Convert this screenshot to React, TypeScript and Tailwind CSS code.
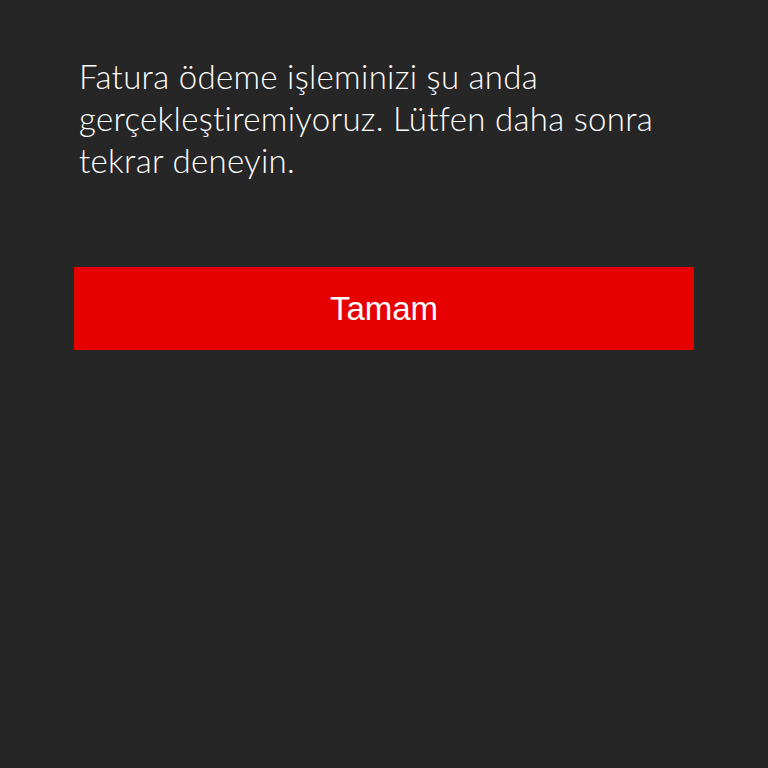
export default function App() {
    return (
        <div className="min-h-[768px] w-full bg-[#262626] px-[74px] pt-[55px]">
            {/* Message */}
            <p className="pl-[5px] text-[33px] leading-[42px] font-light tracking-[0.3px] text-white font-['Lato','Noto_Sans',sans-serif]">
                Fatura ödeme işleminizi şu anda
                <br />
                gerçekleştiremiyoruz. Lütfen daha sonra
                <br />
                tekrar deneyin.
            </p>

            {/* Action */}
            <button className="mt-[86px] flex h-[83px] w-[620px] items-center justify-center bg-[#e60000] text-[33px] text-white font-['Liberation_Sans',Arial,sans-serif]">
                Tamam
            </button>
        </div>
    );
}
